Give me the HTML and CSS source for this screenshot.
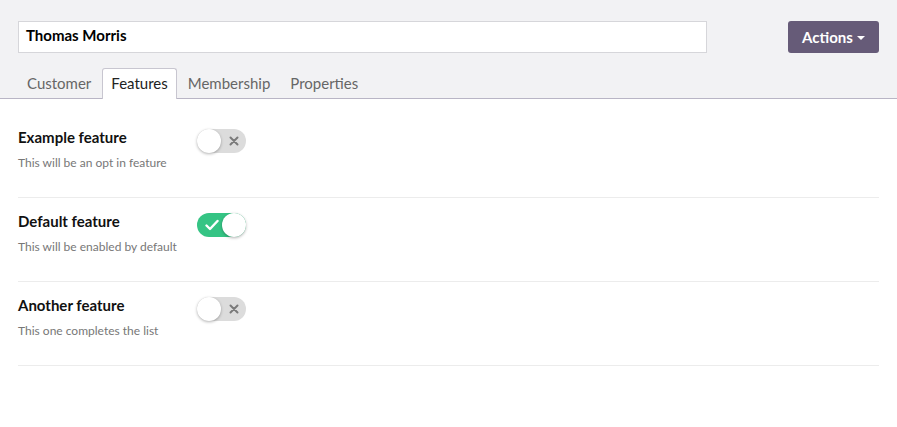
FILE: index.html
```html
<!DOCTYPE html>
<html>
<head>
<meta charset="utf-8">
<link rel="stylesheet" href="styles.css">
</head>
<body>
<div class="header">
  <div class="top-row">
    <div class="name-input">Thomas Morris</div>
    <button class="actions">Actions <span class="caret"></span></button>
  </div>
  <div class="tabs">
    <div class="tab">Customer</div>
    <div class="tab active">Features</div>
    <div class="tab">Membership</div>
    <div class="tab">Properties</div>
  </div>
</div>
<div class="content">
  <div class="row">
    <div class="info">
      <div class="title">Example feature</div>
      <div class="desc">This will be an opt in feature</div>
    </div>
    <div class="toggle off">
      <span class="knob"></span>
      <svg class="icon-x" width="10" height="10" viewBox="0 0 10 10"><path d="M1.5 1.5L8.5 8.5M8.5 1.5L1.5 8.5" stroke="#7a7a7a" stroke-width="2" stroke-linecap="round"/></svg>
    </div>
  </div>
  <div class="row">
    <div class="info">
      <div class="title">Default feature</div>
      <div class="desc">This will be enabled by default</div>
    </div>
    <div class="toggle on">
      <svg class="icon-check" width="14" height="12" viewBox="0 0 14 12"><path d="M1.5 6.5L5 10L12.5 2" fill="none" stroke="#fff" stroke-width="2.4" stroke-linecap="round" stroke-linejoin="round"/></svg>
      <span class="knob"></span>
    </div>
  </div>
  <div class="row">
    <div class="info">
      <div class="title">Another feature</div>
      <div class="desc">This one completes the list</div>
    </div>
    <div class="toggle off">
      <span class="knob"></span>
      <svg class="icon-x" width="10" height="10" viewBox="0 0 10 10"><path d="M1.5 1.5L8.5 8.5M8.5 1.5L1.5 8.5" stroke="#7a7a7a" stroke-width="2" stroke-linecap="round"/></svg>
    </div>
  </div>
</div>
</body>
</html>
```
FILE: styles.css
```css
* { box-sizing: border-box; }
body {
  margin: 0;
  font-family: Lato, "Open Sans", sans-serif;
  background: #fff;
  color: #111;
}
.header {
  background: #f2f2f4;
  padding: 21px 18px 0 18px;
  border-bottom: 1px solid #b9b5c5;
}
.top-row {
  display: flex;
  justify-content: space-between;
  align-items: flex-start;
}
.name-input {
  width: 689px;
  height: 32px;
  background: #fff;
  border: 1px solid #d6d6da;
  padding: 0 7px;
  font-size: 15px;
  font-weight: bold;
  line-height: 26px;
  color: #000;
}
.actions {
  width: 91px;
  height: 32px;
  background: #665b78;
  border: none;
  border-radius: 3px;
  color: #fff;
  font-family: Lato, "Open Sans", sans-serif;
  font-weight: bold;
  font-size: 15px;
  padding: 0;
  display: flex;
  align-items: center;
  justify-content: center;
  gap: 4px;
}
.caret {
  width: 0;
  height: 0;
  border-left: 4px solid transparent;
  border-right: 4px solid transparent;
  border-top: 4px solid #fff;
  margin-top: 2px;
}
.tabs {
  display: flex;
  margin-top: 15px;
  margin-bottom: -1px;
}
.tab {
  height: 31px;
  padding: 0 8px;
  margin-right: 2px;
  font-size: 15px;
  line-height: 28px;
  color: #666;
  border: 1px solid transparent;
  border-bottom: none;
}
.tab.active {
  background: #fff;
  color: #222;
  border-color: #c8c6d0;
  border-radius: 3px 3px 0 0;
}
.content {
  padding: 15px 18px 0 18px;
}
.row {
  display: grid;
  grid-template-columns: 179px auto;
  align-items: start;
  height: 84px;
  padding-top: 13px;
  border-bottom: 1px solid #ececec;
}
.title {
  font-size: 15px;
  font-weight: bold;
  line-height: 20px;
  color: #111;
}
.desc {
  font-size: 12px;
  line-height: 16px;
  color: #777;
  margin-top: 8px;
}
.toggle {
  width: 49px;
  height: 24px;
  border-radius: 12px;
  margin-top: 2px;
  display: flex;
  align-items: center;
  justify-self: start;
}
.toggle.off {
  background: #dcdcdc;
  gap: 8px;
}
.toggle.on {
  background: #35c484;
  justify-content: space-between;
  padding-left: 8px;
}
.knob {
  width: 24px;
  height: 24px;
  border-radius: 50%;
  background: #fff;
  box-shadow: 0 1px 3px rgba(0,0,0,0.3);
  flex: none;
}
.icon-x { flex: none; }
.icon-check { flex: none; }
```
